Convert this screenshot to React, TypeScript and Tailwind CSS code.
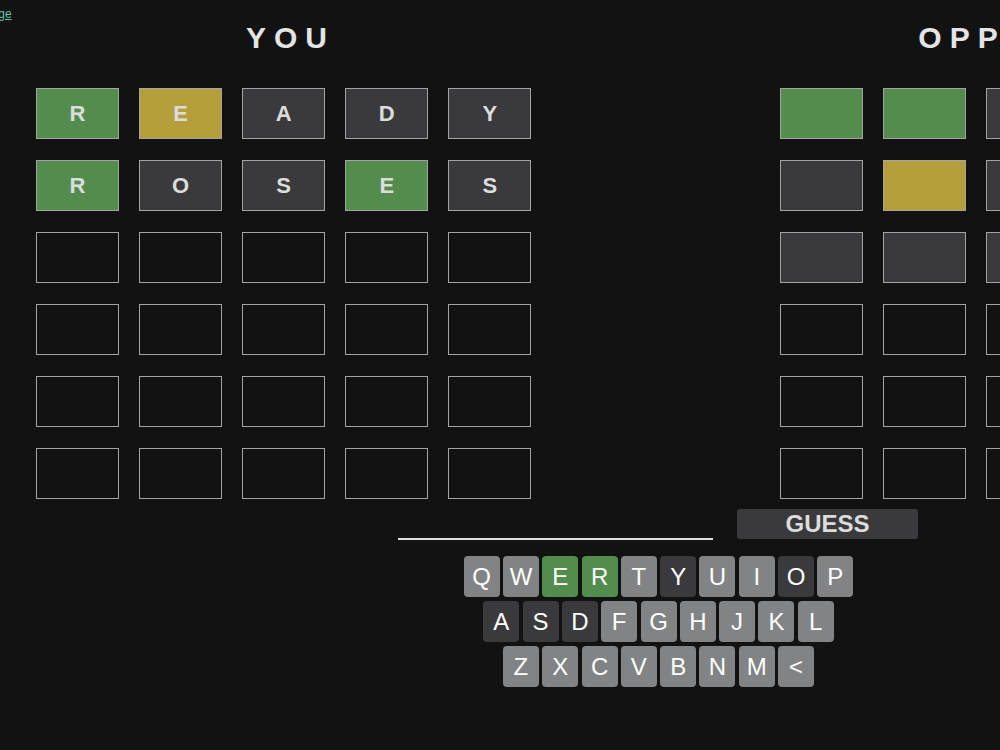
import React from "react";

type Cell = { ch: string; st: "g" | "y" | "x" | "e" };

const tileBg: Record<Cell["st"], string> = {
  g: "bg-[#538d4e]",
  y: "bg-[#b59f3b]",
  x: "bg-[#3a3a3c]",
  e: "bg-transparent",
};

const mine: Cell[][] = [
  [
    { ch: "R", st: "g" },
    { ch: "E", st: "y" },
    { ch: "A", st: "x" },
    { ch: "D", st: "x" },
    { ch: "Y", st: "x" },
  ],
  [
    { ch: "R", st: "g" },
    { ch: "O", st: "x" },
    { ch: "S", st: "x" },
    { ch: "E", st: "g" },
    { ch: "S", st: "x" },
  ],
];

const theirs: Cell["st"][][] = [
  ["g", "g", "x", "x", "x"],
  ["x", "y", "x", "x", "g"],
  ["x", "x", "x", "y", "x"],
];

function fill(rows: Cell[][]): Cell[][] {
  const out = [...rows];
  while (out.length < 6) out.push(Array.from({ length: 5 }, () => ({ ch: "", st: "e" as const })));
  return out;
}

function Board({ title, rows }: { title: string; rows: Cell[][] }) {
  return (
    <div className="flex w-[495px] shrink-0 flex-col">
      <h2 className="h-[88px] pl-[14px] pt-[21px] text-center text-[30px] font-bold leading-[34px] tracking-[8px] text-[#e4e4e4]">
        {title}
      </h2>
      <div className="grid grid-cols-5 gap-x-[20.5px] gap-y-[21px]">
        {fill(rows).flatMap((row, r) =>
          row.map((c, i) => (
            <div
              key={`${r}-${i}`}
              className={`flex h-[51px] w-[83px] items-center justify-center border border-[#a3a3a3] text-[22px] font-bold text-[#dcdcdc] ${tileBg[c.st]}`}
            >
              {c.ch}
            </div>
          ))
        )}
      </div>
    </div>
  );
}

const keyRows: [string, "g" | "x" | "k"][][] = [
  [["Q", "k"], ["W", "k"], ["E", "g"], ["R", "g"], ["T", "k"], ["Y", "x"], ["U", "k"], ["I", "k"], ["O", "x"], ["P", "k"]],
  [["A", "x"], ["S", "x"], ["D", "x"], ["F", "k"], ["G", "k"], ["H", "k"], ["J", "k"], ["K", "k"], ["L", "k"]],
  [["Z", "k"], ["X", "k"], ["C", "k"], ["V", "k"], ["B", "k"], ["N", "k"], ["M", "k"], ["<", "k"]],
];

const keyBg = { g: "bg-[#538d4e]", x: "bg-[#3a3a3c]", k: "bg-[#818384]" };

export default function App() {
  const font = { fontFamily: '"Liberation Sans", Arial, sans-serif' };
  return (
    <div className="relative h-screen w-screen overflow-hidden bg-[#121212]" style={font}>
      <a href="#" className="absolute left-[-47px] top-[5px] text-[12px] text-[#5fc4a8] underline">
        Homepage
      </a>
      <div className="flex w-[1316px] flex-col">
        <div className="flex gap-[249px] pl-[36px]">
          <Board title="YOU" rows={mine} />
          <Board
            title="OPPONENT"
            rows={theirs.map((r) => r.map((st) => ({ ch: "", st: st as Cell["st"] })))}
          />
        </div>
        <div className="mt-[10px] flex items-end justify-center gap-[24px]">
          <div className="mb-[-1px] w-[315px] border-b-2 border-[#dedede]" />
          <button className="h-[30px] w-[181px] rounded-[3px] bg-[#3a3a3c] text-[24px] font-bold leading-[30px] text-[#dcdcdc]">
            GUESS
          </button>
        </div>
        <div className="mt-[17px] flex flex-col items-center gap-[4px] pl-[1px]">
          {keyRows.map((row, r) => (
            <div key={r} className="flex gap-[3.3px]">
              {row.map(([k, s]) => (
                <div
                  key={k}
                  className={`flex h-[41px] w-[36px] items-center justify-center rounded-[4px] text-[24px] text-white ${keyBg[s]}`}
                >
                  {k}
                </div>
              ))}
            </div>
          ))}
        </div>
      </div>
    </div>
  );
}
